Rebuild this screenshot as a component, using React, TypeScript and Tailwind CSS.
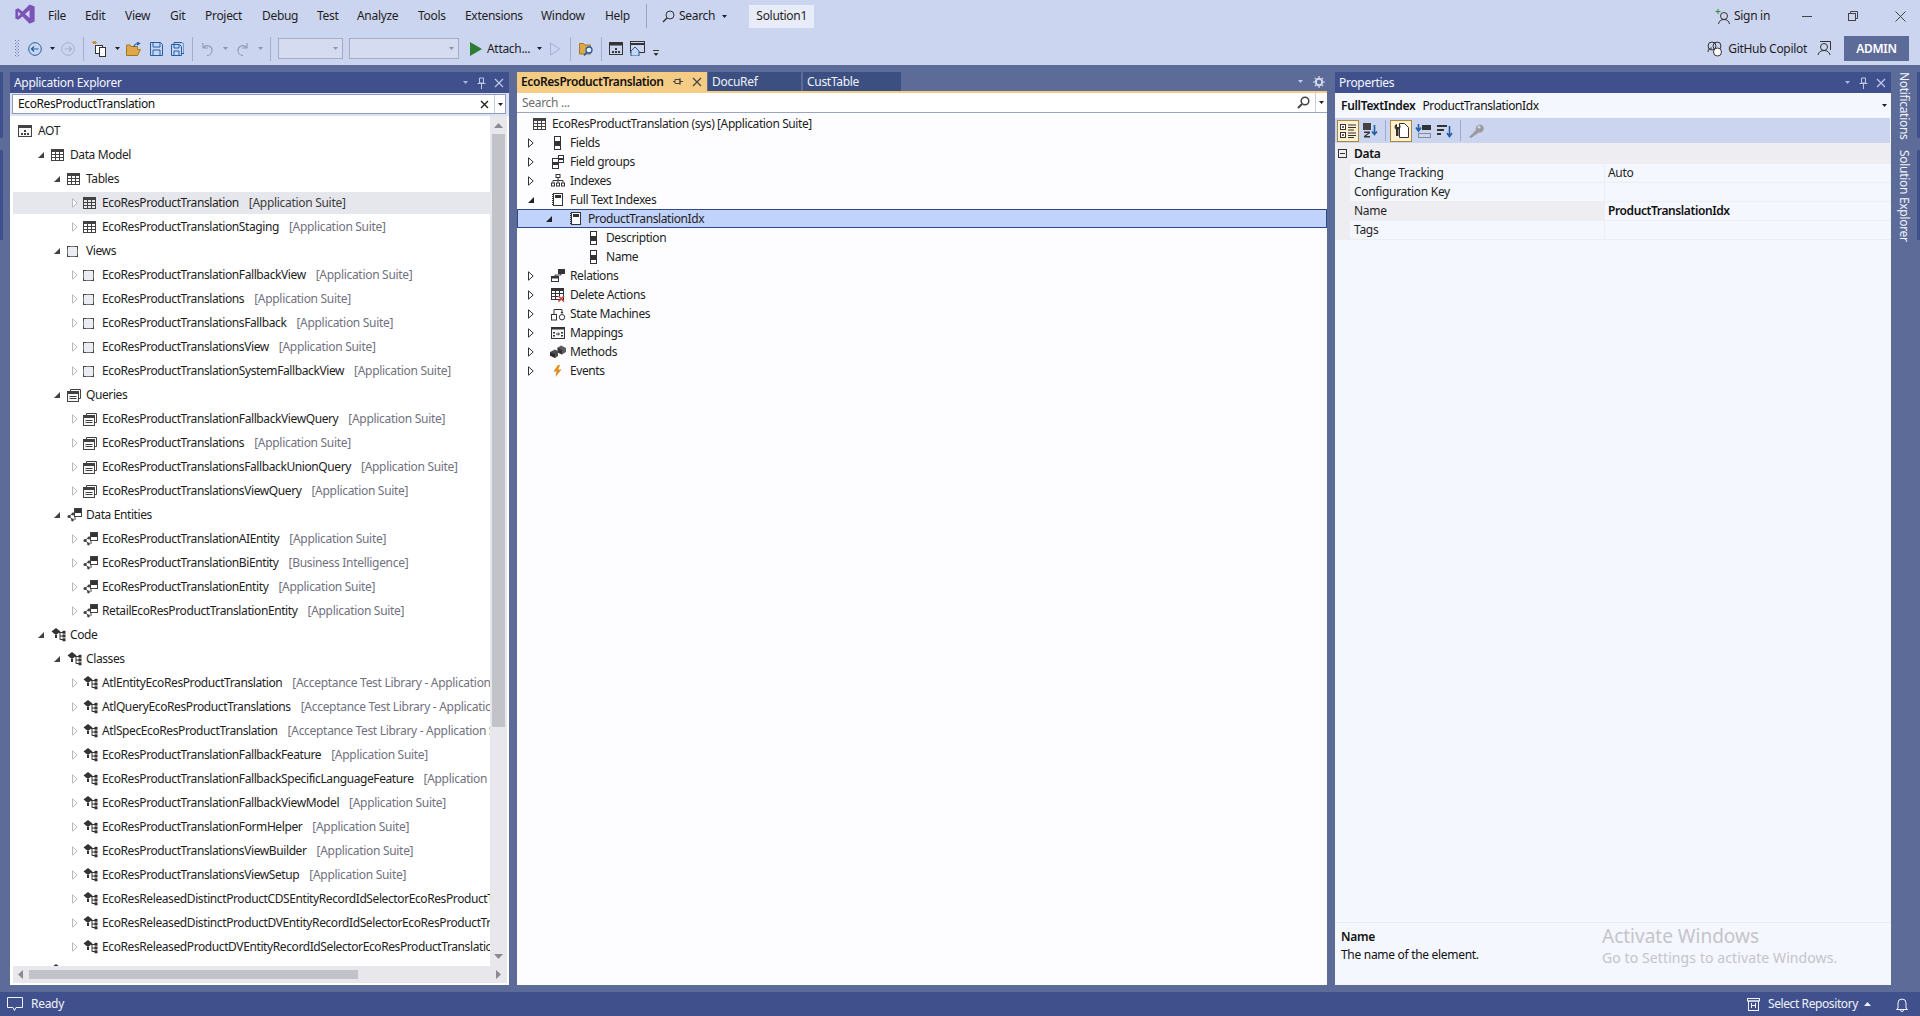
import React from "react";

const D = "#424242";
const Svg = ({ w = 14, h = 14, vb, children, cls = "" }: { w?: number; h?: number; vb?: string; children: React.ReactNode; cls?: string }) => (
  <svg width={w} height={h} viewBox={vb ?? `0 0 ${w} ${h}`} fill="none" className={`shrink-0 ${cls}`}>{children}</svg>
);

const Table = () => (
  <Svg w={13} h={12}>
    <rect x=".5" y=".5" width="12" height="11" stroke={D} />
    <rect x="1" y="1" width="11" height="2" fill={D} />
    <path d="M4.5 3v8M8.5 3v8M1 5.5h11M1 8.5h11" stroke={D} />
  </Svg>
);
const AotIcon = () => (
  <Svg w={14} h={12}>
    <rect x=".5" y=".5" width="13" height="11" stroke={D} fill="#f6f6f6" />
    <rect x="1" y="1" width="12" height="2" fill={D} />
    <path d="M3 8h2v2H3zM6 8h2v2H6zM9 8h2v2H9zM6 5h2v2H6z" fill={D} />
  </Svg>
);
const ViewI = () => (
  <Svg w={11} h={11}>
    <rect x=".5" y=".5" width="10" height="10" stroke="#4a4a4a" fill="#ecedf2" />
    <path d="M3 .5h5M3 10.500h5M.5 3v5M10.500 3v5" stroke="#75757d" />
  </Svg>
);
const QueryI = () => (
  <Svg w={14} h={13}>
    <path d="M3.5 2.5V.5h10v9h-2" stroke={D} />
    <rect x=".5" y="2.5" width="11" height="10" stroke={D} fill="#f6f6f6" />
    <rect x="1" y="3" width="10" height="2" fill={D} />
    <path d="M2.5 7.5h7M2.5 9.5h7" stroke={D} />
  </Svg>
);
const EntityI = () => (
  <Svg w={15} h={14}>
    <rect x="7.5" y=".5" width="7" height="8" fill="#fff" stroke={D} />
    <rect x="8" y="1" width="6" height="4" fill="#333" />
    <path d="M5 6 2 8.5l3 2.5M8 9v3" stroke={D} />
    <circle cx="2" cy="8.500" r="1.600" fill={D} />
    <circle cx="6" cy="6" r="1.400" fill={D} />
    <circle cx="5.500" cy="12" r="1.400" fill={D} />
  </Svg>
);
const ClassI = () => (
  <Svg w={15} h={14}>
    <path d="M5 0 9.500 3.500 5 7 .5 3.500z" fill="#333" />
    <path d="M8 4.500h5M9 4.500v7h3M9 8h3" stroke="#333" />
    <rect x="11.500" y="2.800" width="3" height="3" fill="#333" />
    <rect x="11.500" y="6.500" width="3" height="3" fill="#333" />
    <rect x="11.500" y="10.300" width="3" height="3" fill="#333" />
    <rect x="4" y="7" width="2" height="3" fill="#333" />
  </Svg>
);
const FieldI = () => (
  <Svg w={7} h={14}>
    <rect x=".5" y=".5" width="6" height="13" fill="#fff" stroke="#333" />
    <rect x="1" y="5" width="5" height="5" fill="#333" />
  </Svg>
);
const FieldGroupI = () => (
  <Svg w={12} h={14}>
    <rect x=".5" y="3.500" width="6" height="10" fill="#fff" stroke="#333" />
    <rect x="1" y="7" width="5" height="3" fill="#333" />
    <rect x="6.500" y=".5" width="5" height="7" fill="#fff" stroke="#333" />
    <rect x="7" y="3" width="4" height="2" fill="#333" />
  </Svg>
);
const IndexI = () => (
  <Svg w={14} h={13}>
    <rect x="5" y=".5" width="4" height="3" stroke="#333" />
    <path d="M7 3.500v5M2 8.500V6.500h10v2" stroke="#333" />
    <rect x=".5" y="9" width="3" height="3" stroke="#333" />
    <rect x="5.500" y="9" width="3" height="3" stroke="#333" />
    <rect x="10.500" y="9" width="3" height="3" stroke="#333" />
  </Svg>
);
const FullTextI = () => (
  <Svg w={11} h={13}>
    <rect x="1.500" y=".5" width="9" height="12" fill="#fff" stroke="#333" />
    <rect x="3" y="2" width="6" height="3" fill="#333" />
    <path d="M.5 1v11" stroke="#333" strokeDasharray="1 1" />
  </Svg>
);
const RelationI = () => (
  <Svg w={14} h={13}>
    <rect x="7.500" y=".5" width="6" height="4" fill="#333" stroke="#333" />
    <rect x=".5" y="7.500" width="7" height="5" fill="#fff" stroke="#333" />
    <rect x="1" y="8" width="6" height="1.500" fill="#333" />
    <path d="M10 4.500V6H4v1.500" stroke="#333" />
  </Svg>
);
const DeleteI = () => (
  <Svg w={14} h={14}>
    <rect x=".5" y=".5" width="12" height="11" stroke="#333" />
    <rect x="1" y="1" width="11" height="2" fill="#333" />
    <path d="M4.500 3v8M8.500 3v5M1 5.500h11M1 8.500h6" stroke="#333" />
    <path d="m7.500 8 5.500 5.500M13 8l-5.500 5.500" stroke="#c8453a" strokeWidth="1.600" />
  </Svg>
);
const StateI = () => (
  <Svg w={14} h={14}>
    <rect x=".5" y="7.500" width="5" height="5.500" stroke="#333" />
    <circle cx="11" cy="10.200" r="2.700" stroke="#333" />
    <path d="M3 7V2.500h8V6" stroke="#333" />
    <path d="m9.500 5 1.500 2 1.500-2z" fill="#333" />
  </Svg>
);
const MappingI = () => (
  <Svg w={14} h={12}>
    <rect x=".5" y=".5" width="13" height="11" fill="#f6f6f6" stroke="#333" />
    <rect x="1" y="1" width="12" height="1.500" fill="#333" />
    <path d="M2 5h2v1.500H2zM2 8h2v1.500H2zM10 5h2v1.500h-2zM10 8h2v1.500h-2z" fill="#333" />
    <path d="M5 7h3M7 5.500 8.500 7 7 8.500" stroke="#333" />
  </Svg>
);
const MethodI = () => (
  <Svg w={16} h={13}>
    <path d="M0 7 5 4.500 8 6v5l-3 2-5-2.500z" fill="#4d4d4d" />
    <path d="M0 7l5 2.200V13L0 10.500z" fill="#2e2e2e" />
    <path d="M7 3 11 .5 16 3v4l-4 2.500L8 7.500z" fill="#5c5c5c" />
    <path d="m8 3 4 2v4.500L8 7.500z" fill="#333" />
  </Svg>
);
const EventI = () => (
  <Svg w={9} h={12}>
    <path d="M5 0 .5 6.500h3L2.500 12 8.500 4.500H5.200L7 0z" fill="#E08E1B" />
  </Svg>
);

const ArrowDown = ({ c = D }: { c?: string }) => (
  <svg width="6" height="6" viewBox="0 0 6 6" className="shrink-0"><path d="M6 0v6H0z" fill={c} /></svg>
);
const ArrowRight = ({ c = "#b9b9c1", fill = "#fff" }: { c?: string; fill?: string }) => (
  <svg width="6" height="10" viewBox="0 0 6 10" className="shrink-0"><path d="M.5.8 5.200 5 .5 9.200z" fill={fill} stroke={c} /></svg>
);
const Caret = ({ c = "#333", w = 5 }: { c?: string; w?: number }) => (
  <svg width={w} height={3} viewBox="0 0 5 3" className="shrink-0"><path d="M0 0h5L2.500 3z" fill={c} /></svg>
);

type Row = { l: 0 | 1 | 2 | 3; i: React.ComponentType; n: string; t?: string; sel?: boolean };
const AS = "[Application Suite]";
const rows: Row[] = [
  { l: 0, i: AotIcon, n: "AOT" },
  { l: 1, i: Table, n: "Data Model" },
  { l: 2, i: Table, n: "Tables" },
  { l: 3, i: Table, n: "EcoResProductTranslation", t: AS, sel: true },
  { l: 3, i: Table, n: "EcoResProductTranslationStaging", t: AS },
  { l: 2, i: ViewI, n: "Views" },
  { l: 3, i: ViewI, n: "EcoResProductTranslationFallbackView", t: AS },
  { l: 3, i: ViewI, n: "EcoResProductTranslations", t: AS },
  { l: 3, i: ViewI, n: "EcoResProductTranslationsFallback", t: AS },
  { l: 3, i: ViewI, n: "EcoResProductTranslationsView", t: AS },
  { l: 3, i: ViewI, n: "EcoResProductTranslationSystemFallbackView", t: AS },
  { l: 2, i: QueryI, n: "Queries" },
  { l: 3, i: QueryI, n: "EcoResProductTranslationFallbackViewQuery", t: AS },
  { l: 3, i: QueryI, n: "EcoResProductTranslations", t: AS },
  { l: 3, i: QueryI, n: "EcoResProductTranslationsFallbackUnionQuery", t: AS },
  { l: 3, i: QueryI, n: "EcoResProductTranslationsViewQuery", t: AS },
  { l: 2, i: EntityI, n: "Data Entities" },
  { l: 3, i: EntityI, n: "EcoResProductTranslationAIEntity", t: AS },
  { l: 3, i: EntityI, n: "EcoResProductTranslationBiEntity", t: "[Business Intelligence]" },
  { l: 3, i: EntityI, n: "EcoResProductTranslationEntity", t: AS },
  { l: 3, i: EntityI, n: "RetailEcoResProductTranslationEntity", t: AS },
  { l: 1, i: ClassI, n: "Code" },
  { l: 2, i: ClassI, n: "Classes" },
  { l: 3, i: ClassI, n: "AtlEntityEcoResProductTranslation", t: "[Acceptance Test Library - Application Suite]" },
  { l: 3, i: ClassI, n: "AtlQueryEcoResProductTranslations", t: "[Acceptance Test Library - Application Suite]" },
  { l: 3, i: ClassI, n: "AtlSpecEcoResProductTranslation", t: "[Acceptance Test Library - Application Suite]" },
  { l: 3, i: ClassI, n: "EcoResProductTranslationFallbackFeature", t: AS },
  { l: 3, i: ClassI, n: "EcoResProductTranslationFallbackSpecificLanguageFeature", t: AS },
  { l: 3, i: ClassI, n: "EcoResProductTranslationFallbackViewModel", t: AS },
  { l: 3, i: ClassI, n: "EcoResProductTranslationFormHelper", t: AS },
  { l: 3, i: ClassI, n: "EcoResProductTranslationsViewBuilder", t: AS },
  { l: 3, i: ClassI, n: "EcoResProductTranslationsViewSetup", t: AS },
  { l: 3, i: ClassI, n: "EcoResReleasedDistinctProductCDSEntityRecordIdSelectorEcoResProductTranslation", t: AS },
  { l: 3, i: ClassI, n: "EcoResReleasedDistinctProductDVEntityRecordIdSelectorEcoResProductTranslation", t: AS },
  { l: 3, i: ClassI, n: "EcoResReleasedProductDVEntityRecordIdSelectorEcoResProductTranslation", t: AS },
  { l: 1, i: ClassI, n: "" },
];

const levelPad = ["pl-[5px]", "pl-[25px]", "pl-[41px]", "pl-[59px]"];
const arrowCell = ["w-0", "w-[13px]", "w-[13px]", "w-[11px]"];

function TreeRow({ r }: { r: Row }) {
  const I = r.i;
  return (
    <div className={`flex items-center h-[22px] mb-[2px] whitespace-nowrap ${levelPad[r.l]} ${r.sel ? "bg-[#E6E7ED]" : ""}`}>
      <div className={`flex items-center shrink-0 ${arrowCell[r.l]}`}>
        {r.l === 0 ? null : r.l === 3 ? <ArrowRight /> : <ArrowDown />}
      </div>
      <div className={`flex items-center shrink-0 ${r.l === 0 ? "w-[20px]" : "w-[19px]"}`}><I /></div>
      <span className="text-[#1e1e1e] tracking-[-0.4px]">{r.n}</span>
      {r.t ? <span className={`ml-[10px] ${r.sel ? "text-[#3c3c3c]" : "text-[#717180]"}`}>{r.t}</span> : null}
    </div>
  );
}

const PanelTitle = ({ title }: { title: string }) => (
  <div className="h-[21px] bg-[#40508D] flex items-center text-[#F5F7FE] pl-[4px] shrink-0">
    <span>{title}</span>
    <div className="ml-auto flex items-center pr-[5px] gap-[8px]">
      <Caret c="#A9B5DC" w={7} />
      <Svg w={9} h={12}>
        <path d="M2.500 1h4v5h-4zM.5 6.500h8M4.500 7v5" stroke="#BFCAEA" />
      </Svg>
      <Svg w={10} h={10}>
        <path d="m1 1 8 8M9 1 1 9" stroke="#BFCAEA" strokeWidth="1.200" />
      </Svg>
    </div>
  </div>
);

function Explorer() {
  return (
    <div className="w-[499px] ml-[7px] flex flex-col bg-white shrink-0">
      <PanelTitle title="Application Explorer" />
      <div className="h-[23px] bg-[#DDE3F5] shrink-0 pl-[2px] pr-[3px] pt-px">
        <div className="h-[20px] flex border border-[#8E9BBC] bg-white items-center">
          <span className="pl-[5px] text-[#111] tracking-[-0.4px]">EcoResProductTranslation</span>
          <Svg w={9} h={9} cls="ml-auto mr-[5px]"><path d="m1 1 7 7M8 1 1 8" stroke="#222" strokeWidth="1.400" /></Svg>
          <div className="h-full w-[11px] border-l border-[#C9CEDD] flex items-center justify-center"><Caret c="#222" /></div>
        </div>
      </div>
      <div className="flex-1 min-h-0 flex pl-[3px] pr-[2px] pt-[4px]">
        <div className="flex-1 min-w-0 overflow-hidden">
          {rows.map((r, i) => <TreeRow key={i} r={r} />)}
        </div>
        <div className="w-[17px] -mt-[4px] bg-[#E8E8EC] flex flex-col items-center shrink-0 pt-[7px] pb-[7px]">
          <svg width="9" height="5" viewBox="0 0 9 5" className="shrink-0"><path d="M0 5h9L4.500 0z" fill="#8a8a93" /></svg>
          <div className="w-[13px] h-[593px] bg-[#C2C3C9] mt-[6px]" />
          <svg width="9" height="5" viewBox="0 0 9 5" className="mt-auto shrink-0"><path d="M0 0h9L4.500 5z" fill="#8a8a93" /></svg>
        </div>
      </div>
      <div className="h-[17px] mb-[2px] ml-[3px] mr-[2px] bg-[#E8E8EC] flex items-center shrink-0 pl-[5px] pr-[6px]">
        <svg width="5" height="9" viewBox="0 0 5 9" className="shrink-0"><path d="M5 0v9L0 4.500z" fill="#8a8a93" /></svg>
        <div className="ml-[6px] w-[329px] h-[9px] bg-[#C2C3C9]" />
        <svg width="5" height="9" viewBox="0 0 5 9" className="ml-auto shrink-0"><path d="M0 0v9l5-4.500z" fill="#8a8a93" /></svg>
      </div>
    </div>
  );
}

type DocRow = { l: 0 | 1 | 2 | 3; i: React.ComponentType; n: string; a?: "r" | "d"; sel?: boolean };
const docRows: DocRow[] = [
  { l: 0, i: Table, n: "EcoResProductTranslation (sys) [Application Suite]" },
  { l: 1, i: FieldI, n: "Fields", a: "r" },
  { l: 1, i: FieldGroupI, n: "Field groups", a: "r" },
  { l: 1, i: IndexI, n: "Indexes", a: "r" },
  { l: 1, i: FullTextI, n: "Full Text Indexes", a: "d" },
  { l: 2, i: FullTextI, n: "ProductTranslationIdx", a: "d", sel: true },
  { l: 3, i: FieldI, n: "Description" },
  { l: 3, i: FieldI, n: "Name" },
  { l: 1, i: RelationI, n: "Relations", a: "r" },
  { l: 1, i: DeleteI, n: "Delete Actions", a: "r" },
  { l: 1, i: StateI, n: "State Machines", a: "r" },
  { l: 1, i: MappingI, n: "Mappings", a: "r" },
  { l: 1, i: MethodI, n: "Methods", a: "r" },
  { l: 1, i: EventI, n: "Events", a: "r" },
];
const docPad = ["pl-[16px]", "pl-[11px]", "pl-[28px]", "pl-[65px]"];
const docArrow = ["w-0", "w-[18px]", "w-[18px]", "w-0"];
const docIcon = ["w-[18px] justify-start", "w-[23px] justify-center", "w-[23px] justify-center", "w-[23px] justify-center"];

function DocTree() {
  return (
    <div className="flex-1 flex flex-col bg-[#FDFDFF] pt-[1px] tracking-[-0.4px]">
      {docRows.map((r, i) => {
        const I = r.i;
        return (
          <div key={i} className={`h-[19px] flex items-center whitespace-nowrap text-[#1e1e1e] ${docPad[r.l]} ${r.sel ? "bg-[#C1D3FB] border border-[#2E4A86]" : ""}`}>
            <div className={`flex items-center shrink-0 ${docArrow[r.l]}`}>
              {r.a === "r" ? <ArrowRight c="#333" /> : r.a === "d" ? <ArrowDown c="#222" /> : null}
            </div>
            <div className={`flex items-center shrink-0 ${docIcon[r.l]}`}><I /></div>
            <span className="ml-[1px]">{r.n}</span>
          </div>
        );
      })}
    </div>
  );
}

function Doc() {
  return (
    <div className="w-[810px] ml-[8px] flex flex-col shrink-0">
      <div className="h-[21px] flex border-b-2 border-[#F5CC84] shrink-0">
        <div className="w-[190px] h-[19px] bg-[#F5CC84] flex items-center pl-[4px] font-semibold text-[#111] tracking-[-0.4px]">
          <span>EcoResProductTranslation</span>
          <Svg w={10} h={9} cls="ml-[9px]"><path d="M2 2.500h5v4H2zM0 4.500h2M7 4.500h3M7 1v7" stroke="#444" /></Svg>
          <Svg w={10} h={10} cls="ml-[9px]"><path d="m1 1 8 8M9 1 1 9" stroke="#444" strokeWidth="1.200" /></Svg>
        </div>
        <div className="w-[93px] ml-[1px] h-[19px] bg-[#3B4F81] text-[#F1F3FB] pl-[4px] flex items-center">DocuRef</div>
        <div className="w-[98px] ml-[2px] h-[19px] bg-[#3B4F81] text-[#F1F3FB] pl-[4px] flex items-center">CustTable</div>
        <div className="ml-auto flex items-center h-[19px] pr-[2px]">
          <Caret c="#C4CCE8" w={7} />
          <Svg w={12} h={12} cls="ml-[9px]">
            <circle cx="6" cy="6" r="3.200" stroke="#D4DAEE" strokeWidth="2" />
            <path d="M6 0v2M6 10v2M0 6h2M10 6h2M1.800 1.800l1.400 1.400M8.800 8.800l1.400 1.400M1.800 10.200l1.400-1.400M8.800 3.200l1.400-1.400" stroke="#D4DAEE" strokeWidth="1.200" />
          </Svg>
        </div>
      </div>
      <div className="h-[20px] flex items-center bg-white border-b border-[#9AA5C4] shrink-0 pl-[5px]">
        <span className="text-[#6d6d6d] pt-px">Search ...</span>
        <Svg w={13} h={13} cls="ml-auto mr-[5px]">
          <circle cx="8" cy="5" r="3.800" stroke="#444" strokeWidth="1.500" />
          <path d="M5 8 1 12" stroke="#444" strokeWidth="2" />
        </Svg>
        <div className="h-full w-[12px] border-l border-[#C9CEDD] flex items-center justify-center"><Caret c="#222" /></div>
      </div>
      <DocTree />
    </div>
  );
}

const GoldBtn = ({ children, on }: { children: React.ReactNode; on?: boolean }) => (
  <div className={`w-[22px] h-[22px] flex items-center justify-center shrink-0 ${on ? "bg-[#FFF0D0] border border-[#A9873F]" : ""}`}>{children}</div>
);
const TbSep = () => <div className="w-px h-[21px] mx-[4px] bg-[#9FAAD0] shrink-0" />;

function Props() {
  const cells: [string, string, boolean?][] = [
    ["Change Tracking", "Auto"],
    ["Configuration Key", ""],
    ["Name", "ProductTranslationIdx", true],
    ["Tags", ""],
  ];
  return (
    <div className="w-[556px] ml-[8px] flex flex-col bg-[#F5F7FE] shrink-0">
      <PanelTitle title="Properties" />
      <div className="h-[25px] flex items-center pl-[6px] pr-[4px] shrink-0 text-[#111]">
        <span className="font-semibold">FullTextIndex</span>
        <span className="ml-[7px] tracking-[-0.4px]">ProductTranslationIdx</span>
        <div className="ml-auto"><Caret c="#222" /></div>
      </div>
      <div className="h-[25px] bg-[#CCD5F0] flex items-center pl-[2px] shrink-0 mr-px">
        <GoldBtn on>
          <Svg w={16} h={14}>
            <rect x=".5" y=".5" width="5" height="5" fill="#fff" stroke="#333" />
            <rect x=".5" y="8.500" width="5" height="5" fill="#fff" stroke="#333" />
            <path d="M2 3h2M3 2v2M2 11h2M3 10v2" stroke="#333" />
            <path d="M8 1h8M8 3.500h8M8 6h6M8 9h8M8 11.500h8M8 13.500h6" stroke="#333" />
          </Svg>
        </GoldBtn>
        <GoldBtn>
          <Svg w={16} h={15}>
            <rect x="1" y="0" width="8" height="7" fill="#444" />
            <path d="M2 8.500h6v1.500L4 13h4v1.500H2V13l4-3H2z" fill="#333" />
            <path d="M12.500 2v9M10 8.500l2.500 3 2.500-3" stroke="#1F5FA6" strokeWidth="1.600" />
          </Svg>
        </GoldBtn>
        <TbSep />
        <GoldBtn on>
          <Svg w={15} h={15}>
            <path d="M5.500.5h5l4 4v10h-9z" fill="#fff" stroke="#333" />
            <path d="M3 1a3 3 0 0 0-1 5.500V13h2.500V6.500A3 3 0 0 0 5 1v3H3z" fill="#333" />
          </Svg>
        </GoldBtn>
        <GoldBtn>
          <Svg w={17} h={14}>
            <path d="M3.500 0v6M1 3.500 3.500 7 6 3.500" stroke="#1F5FA6" strokeWidth="1.600" />
            <rect x="7" y="1" width="9" height="5" fill="#333" />
            <rect x="3.500" y="9.500" width="12" height="4" stroke="#444" strokeDasharray="1 1" />
          </Svg>
        </GoldBtn>
        <GoldBtn>
          <Svg w={17} h={14}>
            <rect x="0" y="1" width="10" height="2" fill="#333" />
            <rect x="0" y="5" width="7" height="2" fill="#333" />
            <rect x="0" y="9" width="4" height="2" fill="#333" />
            <path d="M12.500 2v10M10 9l2.500 3.500L15 9" stroke="#1F5FA6" strokeWidth="1.600" />
          </Svg>
        </GoldBtn>
        <TbSep />
        <GoldBtn>
          <Svg w={16} h={15}>
            <path d="M1 14l7-7a4 4 0 1 1 3 2.500L3 15z" fill="#9a9aa0" />
            <circle cx="11" cy="4" r="1.600" fill="#CCD5F0" />
          </Svg>
        </GoldBtn>
      </div>
      <div className="h-[21px] bg-[#EEEEF2] flex items-center shrink-0 text-[#111]">
        <Svg w={9} h={9} cls="ml-[3px] mr-[7px]"><rect x=".5" y=".5" width="8" height="8" stroke="#333" /><path d="M2 4.500h5" stroke="#333" /></Svg>
        <span className="font-semibold">Data</span>
      </div>
      {cells.map(([k, v, b]) => (
        <div key={k} className="h-[19px] flex shrink-0 border-b border-[#EEEEF2] text-[#1e1e1e]">
          <div className="w-[15px] bg-[#EEEEF2] shrink-0" />
          <div className={`w-[254px] pl-[4px] flex items-center shrink-0 ${b ? "bg-[#EEEEF2]" : ""}`}>{k}</div>
          <div className="w-px bg-[#EEEEF2] shrink-0" />
          <div className={`pl-[3px] flex items-center ${b ? "font-semibold text-[#111] tracking-[-0.4px]" : ""}`}>{v}</div>
        </div>
      ))}
      <div className="flex-1" />
      <div className="h-[63px] border-t border-[#EBEDF5] flex shrink-0">
        <div className="w-[267px] pl-[6px] pt-[5px] leading-[18px] text-[#111] shrink-0">
          <div className="font-semibold">Name</div>
          <div>The name of the element.</div>
        </div>
        <div className="text-[#C4C4CA] whitespace-nowrap tracking-normal">
          <div className="text-[19px] leading-[26px]">Activate Windows</div>
          <div className="text-[14px] leading-[18px] tracking-[0.1px]">Go to Settings to activate Windows.</div>
        </div>
      </div>
    </div>
  );
}

const Sep = ({ cls }: { cls: string }) => <div className={`w-px h-[24px] bg-[#A3AED3] shrink-0 ${cls}`} />;

const menus: [string, string][] = [
  ["File", "w-[37px]"], ["Edit", "w-[40px]"], ["View", "w-[45px]"], ["Git", "w-[35px]"], ["Project", "w-[57px]"], ["Debug", "w-[55px]"],
  ["Test", "w-[40px]"], ["Analyze", "w-[61px]"], ["Tools", "w-[47px]"], ["Extensions", "w-[76px]"], ["Window", "w-[64px]"], ["Help", "w-[41px]"],
];

const gripDots = [0, 3, 6, 9, 12, 15];

function TitleBar() {
  return (
    <div className="h-[65px] bg-[#CCD5F0] shrink-0 flex flex-col text-[#1e1e1e]">
      <div className="h-[32px] flex items-center">
        <Svg w={22} h={22} vb="0 0 24 24" cls="ml-[14px] mr-[12px] -mt-[4px]">
          <path fillRule="evenodd" d="M17 1.500 9.300 9.200 4.600 5.600 1.500 7.200v9.600l3.100 1.600 4.700-3.600 7.700 7.700 5.500-2.200V3.700zM4.500 9.300 7.200 12l-2.700 2.700zM17 7.600v8.800L12 12z" fill="#7B54B8" />
        </Svg>
        {menus.map(([m, w]) => <div key={m} className={`${w} shrink-0`}>{m}</div>)}
        <div className="w-px h-[24px] bg-[#98A4C8] shrink-0" />
        <Svg w={13} h={13} cls="ml-[15px]">
          <circle cx="8" cy="5" r="4" stroke="#333" />
          <path d="M5 8 1 12" stroke="#333" strokeWidth="1.400" />
        </Svg>
        <span className="ml-[4px]">Search</span>
        <div className="ml-[7px]"><Caret c="#222" /></div>
        <div className="ml-[22px] w-[65px] h-[23px] bg-[#E8ECF9] flex items-center justify-center text-[#1e1e1e]">Solution1</div>
        <Svg w={15} h={15} cls="ml-auto">
          <path d="M3 0v5M.5 2.500h5" stroke="#2F8B2F" />
          <circle cx="9" cy="7" r="3.500" stroke="#333" />
          <path d="M3.500 15c.5-3 2.500-4.500 5.500-4.500s5 1.500 5.500 4.500" stroke="#333" />
        </Svg>
        <span className="ml-[4px]">Sign in</span>
        <div className="ml-[32px] w-[10px] h-px bg-[#444]" />
        <Svg w={10} h={10} cls="ml-[36px]">
          <rect x=".5" y="2.500" width="7" height="7" stroke="#444" />
          <path d="M2.500 2.500v-2h7v7h-2" stroke="#444" />
        </Svg>
        <Svg w={11} h={11} cls="ml-[37px] mr-[14px]"><path d="m.5.5 10 10M10.500.5l-10 10" stroke="#444" /></Svg>
      </div>
      <div className="h-[33px] flex items-center">
        <Svg w={4} h={17} cls="ml-[15px]">
          {gripDots.map((y) => <path key={y} d={`M0 ${y}h1v1H0zM3 ${y}h1v1H3zM1.500 ${y + 1.500}h1v1h-1z`} fill="#7580A3" />)}
        </Svg>
        <Svg w={14} h={14} cls="ml-[9px]">
          <circle cx="7" cy="7" r="6.300" stroke="#1F5FA6" />
          <path d="M10.500 7h-7M6 4.500 3.500 7 6 9.500" stroke="#1F5FA6" strokeWidth="1.200" />
        </Svg>
        <div className="ml-[8px]"><Caret c="#222" /></div>
        <Svg w={14} h={14} cls="ml-[6px]">
          <circle cx="7" cy="7" r="6.300" stroke="#A8B1CC" />
          <path d="M3.500 7h7M8 4.500 10.500 7 8 9.500" stroke="#A8B1CC" strokeWidth="1.200" />
        </Svg>
        <Sep cls="ml-[8px]" />
        <Svg w={15} h={16} cls="ml-[8px]">
          <path d="M3 0v3M0 1.500h5M1 0l3 3M4 0 1 3" stroke="#C68A2E" />
          <rect x="3.500" y="4.500" width="7" height="8" stroke="#333" fill="#fff" />
          <rect x="7.500" y="6.500" width="6" height="9" stroke="#333" fill="#fff" />
        </Svg>
        <div className="ml-[8px]"><Caret c="#222" /></div>
        <Svg w={15} h={14} cls="ml-[6px]">
          <path d="M.5 5.500v8h11l3-6h-3v-3H5l-1-1.500H.5z" fill="#DCA84A" stroke="#A3761F" />
          <path d="M8 5c0-2 2-3.500 4.500-3.500M11 0l2.500 1.500L11 3" stroke="#1F5FA6" strokeWidth="1.200" />
        </Svg>
        <Svg w={13} h={14} cls="ml-[9px]">
          <path d="M.5.5h10l2 2v11H.5z" stroke="#1F5FA6" />
          <path d="M3 .5v4.500h7V.5M3 13.500V8h7v5.500" stroke="#1F5FA6" />
        </Svg>
        <Svg w={13} h={14} cls="ml-[8px]">
          <path d="M3 2.500V.5h8l2 2v9h-2" stroke="#1F5FA6" />
          <path d="M.5 2.500h8l2 2v9H.5z" stroke="#1F5FA6" />
          <path d="M3 3v3h5V3M3 13V9h5v4" stroke="#1F5FA6" />
        </Svg>
        <Sep cls="ml-[8px]" />
        <Svg w={12} h={14} cls="ml-[8px]">
          <path d="M2 1v5h5M2.500 5.500c3-3.500 9-1.500 8.500 3.500-.3 3-3 4.500-5 4.500" stroke="#9098B2" strokeWidth="1.100" />
        </Svg>
        <div className="ml-[10px]"><Caret c="#8d94ad" /></div>
        <Svg w={12} h={14} cls="ml-[9px]">
          <path d="M10 1v5H5M9.500 5.500c-3-3.500-9-1.500-8.500 3.500.3 3 3 4.500 5 4.500" stroke="#9098B2" strokeWidth="1.100" />
        </Svg>
        <div className="ml-[9px]"><Caret c="#8d94ad" /></div>
        <Sep cls="ml-[7px]" />
        <div className="ml-[7px] w-[65px] h-[21px] bg-[#D5DCF2] border border-[#A5ACBE] flex items-center justify-end pr-[4px] shrink-0"><Caret c="#8d94ad" /></div>
        <div className="ml-[6px] w-[110px] h-[21px] bg-[#D5DCF2] border border-[#A5ACBE] flex items-center justify-end pr-[4px] shrink-0"><Caret c="#8d94ad" /></div>
        <svg width="12" height="14" viewBox="0 0 12 14" className="ml-[11px] shrink-0"><path d="M0 0v14l12-7z" fill="#2E7D32" /></svg>
        <span className="ml-[5px] w-[43px] shrink-0 whitespace-nowrap">Attach...</span>
        <div className="ml-[7px]"><Caret c="#222" /></div>
        <svg width="10" height="14" viewBox="0 0 10 14" fill="none" className="ml-[8px] shrink-0"><path d="M.5 1v12l9-6z" stroke="#A3AED3" /></svg>
        <Sep cls="ml-[10px]" />
        <Svg w={15} h={15} cls="ml-[8px]">
          <path d="M.5 2.500h4l1 1.500h6v9H.5z" fill="#DCA84A" stroke="#A3761F" />
          <circle cx="10" cy="9" r="3" stroke="#1F5FA6" strokeWidth="1.300" fill="#E8ECF9" />
          <path d="m8 11-3 3.500" stroke="#1F5FA6" strokeWidth="1.600" />
        </Svg>
        <Sep cls="ml-[7px]" />
        <Svg w={14} h={13} cls="ml-[7px]">
          <rect x=".5" y=".5" width="13" height="12" stroke="#333" />
          <rect x="1" y="1" width="12" height="2.500" fill="#333" />
          <path d="M3 9h2v2H3zM6 9h2v2H6zM9 9h2v2H9zM6 6h2v2H6z" fill="#333" />
        </Svg>
        <Svg w={15} h={15} cls="ml-[7px]">
          <rect x=".5" y=".5" width="14" height="11" stroke="#333" />
          <path d="M1 3h13" stroke="#333" strokeWidth="2" />
          <path d="M1 10 5 6l4 4v5H1z" fill="#CCD5F0" stroke="#1F5FA6" />
        </Svg>
        <div className="ml-[8px] flex flex-col items-center gap-[2px] mt-[9px]">
          <div className="w-[6px] h-px bg-[#333]" />
          <Caret c="#333" w={6} />
        </div>
        <Svg w={16} h={16} cls="ml-auto">
          <circle cx="5" cy="5" r="4" stroke="#333" />
          <circle cx="10" cy="5" r="4" stroke="#333" />
          <path d="M1 11c0-3 2-4 4-4" stroke="#333" />
          <circle cx="10.500" cy="11" r="4" stroke="#333" fill="#fff" />
        </Svg>
        <span className="ml-[5px]">GitHub Copilot</span>
        <Svg w={14} h={15} cls="ml-[10px]">
          <path d="M3 .5h10.500V9" stroke="#333" />
          <circle cx="7" cy="6" r="3.500" stroke="#333" />
          <path d="M1 14c.5-3 3-4.500 6-4.500s5.500 1.500 6 4.500" stroke="#333" />
        </Svg>
        <div className="ml-[13px] mr-[11px] w-[65px] h-[25px] bg-[#5D6B99] text-white font-semibold flex items-center justify-center shrink-0">ADMIN</div>
      </div>
    </div>
  );
}

function StatusBar() {
  return (
    <div className="h-[24px] bg-[#40508D] flex items-center text-[#F1F3FB] shrink-0">
      <Svg w={16} h={14} cls="ml-[7px]"><path d="M.5.5h15v10H9l-1.500 3-1.500-3H.5z" stroke="#F1F3FB" /></Svg>
      <span className="ml-[8px]">Ready</span>
      <Svg w={13} h={13} cls="ml-auto">
        <rect x=".5" y=".5" width="12" height="2.500" stroke="#F1F3FB" />
        <rect x="1.500" y="3" width="10" height="9.500" stroke="#F1F3FB" />
        <path d="M4.500 5v5M8.500 5v5M4.500 7.500h4" stroke="#F1F3FB" />
      </Svg>
      <span className="ml-[8px] tracking-[-0.4px]">Select Repository</span>
      <Svg w={7} h={4} cls="ml-[6px]"><path d="M0 4h7L3.500 0z" fill="#F1F3FB" /></Svg>
      <Svg w={12} h={15} cls="ml-[25px] mr-[12px]"><path d="M2 11V6a4 4 0 0 1 8 0v5l1.500 1.500H.5zM4.500 13a1.500 1.500 0 0 0 3 0" stroke="#F1F3FB" /></Svg>
    </div>
  );
}

export default function App() {
  return (
    <div className="w-[1920px] h-[1016px] flex flex-col bg-[#5D6B99] overflow-hidden text-[12px] leading-[16px] font-['Noto_Sans','Open_Sans',sans-serif] tracking-[-0.3px]">
      <TitleBar />
      <div className="flex-1 min-h-0 flex pt-[7px] pb-[7px]">
        <div className="w-[3px] shrink-0 flex flex-col">
          <div className="h-[66px] bg-[#40508D]" />
          <div className="h-[90px] mt-[12px] bg-[#40508D]" />
        </div>
        <Explorer />
        <Doc />
        <Props />
        <div className="w-[29px] flex shrink-0">
          <div className="flex-1 flex flex-col items-center text-[#F1F3FB]">
            <div className="[writing-mode:vertical-rl] h-[66px] flex items-center whitespace-nowrap">Notifications</div>
            <div className="[writing-mode:vertical-rl] h-[90px] mt-[12px] flex items-center whitespace-nowrap">Solution Explorer</div>
          </div>
          <div className="w-[3px] shrink-0 flex flex-col">
            <div className="h-[66px] bg-[#40508D]" />
            <div className="h-[90px] mt-[12px] bg-[#40508D]" />
          </div>
        </div>
      </div>
      <StatusBar />
    </div>
  );
}
